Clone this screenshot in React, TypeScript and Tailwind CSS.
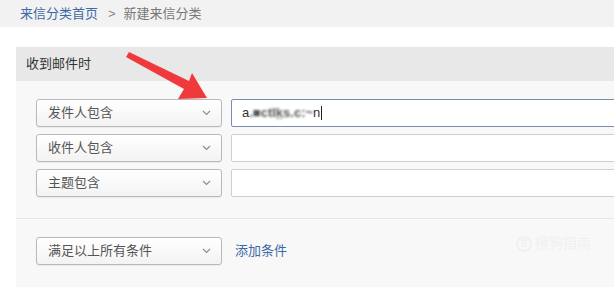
import React from "react";

const font = { fontFamily: '"Liberation Sans", "Noto Sans CJK SC", sans-serif' };

function Chevron() {
  return (
    <svg width="9" height="6" viewBox="0 0 9 6" className="shrink-0">
      <path d="M1 1l3.5 3.5L8 1" fill="none" stroke="#8a8a8a" strokeWidth="1.1" />
    </svg>
  );
}

function Select({ label }: { label: string }) {
  return (
    <div className="flex h-[28px] w-[186px] shrink-0 items-center justify-between rounded-[3px] border border-[#b9b9b9] bg-gradient-to-b from-white to-[#f3f3f3] pl-[11px] pr-[10px] text-[13px] text-[#555] shadow-[0_1px_1px_rgba(0,0,0,0.06)]">
      <span>{label}</span>
      <Chevron />
    </div>
  );
}

export default function App() {
  const rows = ["发件人包含", "收件人包含", "主题包含"];
  return (
    <div className="relative h-[292px] w-[614px] overflow-hidden bg-white" style={font}>
      <div className="flex h-[27px] items-center bg-[#f2f2f2] pl-[20px] text-[13px]">
        <span className="text-[#3d6aa6]">来信分类首页</span>
        <span className="ml-[10px] text-[#888]">&gt;</span>
        <span className="ml-[8px] text-[#777]">新建来信分类</span>
      </div>

      <div className="ml-[16px] mt-[20px] w-[640px]">
        <div className="flex h-[34px] items-center bg-[#e8e8e8] pl-[10px] text-[13px] text-[#333]">
          收到邮件时
        </div>
        <div className="bg-[#f8f8f8]">
          <div className="flex flex-col gap-[7px] border-b border-[#e6e6e6] pb-[21px] pl-[20px] pt-[18px]">
            {rows.map((label, i) => (
              <div key={label} className="flex items-center gap-[9px]">
                <Select label={label} />
                <div
                  className={
                    "flex h-[28px] flex-1 items-center rounded-[2px] bg-white pl-[10px] text-[13px] text-[#333] " +
                    (i === 0 ? "border border-[#7d8bb3]" : "border border-[#cfcfcf]")
                  }
                >
                  {i === 0 && (
                    <>
                      <span>a</span>
                      <span className="blur-[0.8px] font-bold text-[#555]">.■ctlk̲s.c:~</span>
                      <span>n</span>
                      <span className="ml-[1px] h-[14px] w-px bg-[#222]" />
                    </>
                  )}
                </div>
              </div>
            ))}
          </div>
          <div className="relative flex items-center pb-[22px] pl-[20px] pt-[18px]">
            <Select label="满足以上所有条件" />
            <span className="ml-[13px] text-[13px] text-[#3d6aa6]">添加条件</span>
            <div className="absolute left-[500px] top-[14px] flex items-center gap-[3px] text-[#f0f0f0]">
              <span className="flex h-[16px] w-[16px] items-center justify-center rounded-full border-2 border-[#f0f0f0] text-[10px] font-bold">S</span>
              <span className="text-[14px]">搜狗指南</span>
            </div>
          </div>
        </div>
      </div>

      <svg className="absolute left-0 top-0" width="614" height="292" viewBox="0 0 614 292">
        <path
          d="M126 57 L129 52 L189 81 L192 73 L207 98 L178 99 L184 89 Z"
          fill="#f0393b"
        />
      </svg>
    </div>
  );
}
